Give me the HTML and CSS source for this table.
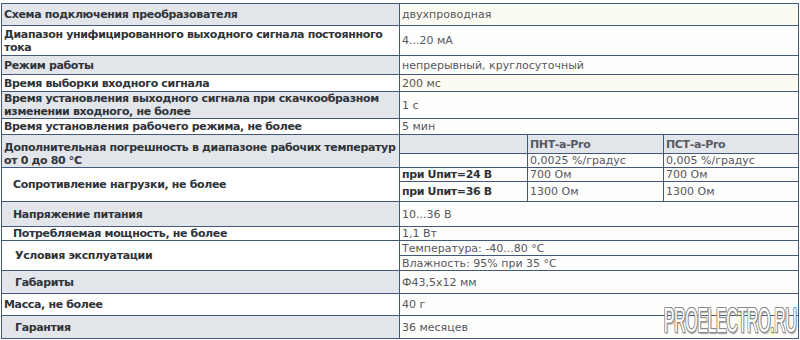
FILE: index.html
```html
<!DOCTYPE html>
<html lang="ru">
<head>
<meta charset="utf-8">
<title>Характеристики</title>
<link rel="stylesheet" href="styles.css">
</head>
<body>
<div class="wrap">
<table class="spec">
  <colgroup>
    <col class="c-label">
    <col class="c-sub">
    <col class="c-a">
    <col class="c-b">
  </colgroup>
  <tr class="r22 alt">
    <th>Схема подключения преобразователя</th>
    <td colspan="3" class="cream">двухпроводная</td>
  </tr>
  <tr class="r30">
    <th>Диапазон унифицированного выходного сигнала постоянного тока</th>
    <td colspan="3">4...20 мА</td>
  </tr>
  <tr class="r19 alt">
    <th>Режим работы</th>
    <td colspan="3">непрерывный, круглосуточный</td>
  </tr>
  <tr class="r17">
    <th>Время выборки входного сигнала</th>
    <td colspan="3" class="cream">200 мс</td>
  </tr>
  <tr class="r26 alt">
    <th>Время установления выходного сигнала при скачкообразном изменении входного, не более</th>
    <td colspan="3">1 с</td>
  </tr>
  <tr class="r16">
    <th>Время установления рабочего режима, не более</th>
    <td colspan="3">5 мин</td>
  </tr>
  <tr class="r19 alt">
    <th rowspan="2" class="top">Дополнительная погрешность в диапазоне рабочих температур от 0 до 80 °C</th>
    <td class="subhead"></td>
    <td class="subhead">ПНТ-a-Pro</td>
    <td class="subhead">ПСТ-a-Pro</td>
  </tr>
  <tr class="r14">
    <td></td>
    <td>0,0025 %/градус</td>
    <td>0,005 %/градус</td>
  </tr>
  <tr class="r14">
    <th rowspan="2" class="ind">Сопротивление нагрузки, не более</th>
    <td class="sublabel">при Uпит=24 В</td>
    <td>700 Ом</td>
    <td>700 Ом</td>
  </tr>
  <tr class="r20">
    <td class="sublabel">при Uпит=36 В</td>
    <td>1300 Ом</td>
    <td>1300 Ом</td>
  </tr>
  <tr class="r25 alt">
    <th class="ind">Напряжение питания</th>
    <td colspan="3">10...36 В</td>
  </tr>
  <tr class="r14">
    <th class="ind">Потребляемая мощность, не более</th>
    <td colspan="3">1,1 Вт</td>
  </tr>
  <tr class="r15">
    <th rowspan="2" class="ind2">Условия эксплуатации</th>
    <td colspan="3">Температура: -40...80 °C</td>
  </tr>
  <tr class="r15">
    <td colspan="3">Влажность: 95% при 35 °C</td>
  </tr>
  <tr class="r23 alt">
    <th class="ind2">Габариты</th>
    <td colspan="3">Ф43,5х12 мм</td>
  </tr>
  <tr class="r22">
    <th>Масса, не более</th>
    <td colspan="3">40 г</td>
  </tr>
  <tr class="r23 alt">
    <th class="ind2">Гарантия</th>
    <td colspan="3">36 месяцев</td>
  </tr>
</table>
<div class="watermark">PROELECTRO.RU</div>
</div>
</body>
</html>
```

FILE: styles.css
```css
html, body {
  margin: 0;
  padding: 0;
  background: #ffffff;
}

.wrap {
  position: relative;
  width: 800px;
  height: 340px;
  padding: 3px 0 0 1px;
  box-sizing: border-box;
}

.spec {
  border-collapse: collapse;
  table-layout: fixed;
  width: 797px;
  font-family: "DejaVu Sans", Verdana, sans-serif;
  font-size: 11px;
  line-height: 13px;
}

.c-label { width: 398px; }
.c-sub { width: 128px; }
.c-a { width: 136px; }
.c-b { width: 135px; }

.spec th,
.spec td {
  border: 1px solid #44587a;
  padding: 0 2px;
  vertical-align: middle;
  text-align: left;
  overflow: hidden;
}

.spec th {
  font-weight: bold;
  letter-spacing: -0.35px;
  color: #2f3338;
  background: #ffffff;
}

.spec td {
  font-weight: normal;
  color: #55585c;
  background: #fefefc;
}

.spec tr.alt th {
  background: #e2e5ea;
}

.spec td.cream {
  background: #fcfbf2;
}

.spec td.subhead {
  background: #e2e5ea;
  font-weight: bold;
  letter-spacing: -0.35px;
  color: #575b61;
}

.spec td.sublabel {
  font-weight: bold;
  letter-spacing: -0.35px;
  color: #2f3338;
}

.spec th.ind { padding-left: 11px; }
.spec th.ind2 { padding-left: 13px; }
.spec th.top { vertical-align: top; padding-top: 6px; }

.r14 { height: 14px; }
.r15 { height: 15px; }
.r16 { height: 16px; }
.r17 { height: 17px; }
.r19 { height: 19px; }
.r20 { height: 20px; }
.r22 { height: 22px; }
.r23 { height: 23px; }
.r25 { height: 25px; }
.r26 { height: 26px; }
.r30 { height: 30px; }

.watermark {
  position: absolute;
  right: 4px;
  bottom: 4px;
  font-family: "Liberation Sans", Arial, sans-serif;
  font-size: 35px;
  line-height: 32px;
  letter-spacing: -1px;
  color: #ffffff;
  transform: scaleX(0.46);
  transform-origin: right bottom;
  text-shadow:
    1px 0 0 #8a8a8a, -1px 0 0 #8a8a8a, 0 1px 0 #8a8a8a, 0 -1px 0 #8a8a8a,
    1px 1px 0 #8a8a8a, -1px -1px 0 #8a8a8a, 1px -1px 0 #8a8a8a, -1px 1px 0 #8a8a8a,
    2px 2px 2px #9a9a9a;
  white-space: nowrap;
}
```
